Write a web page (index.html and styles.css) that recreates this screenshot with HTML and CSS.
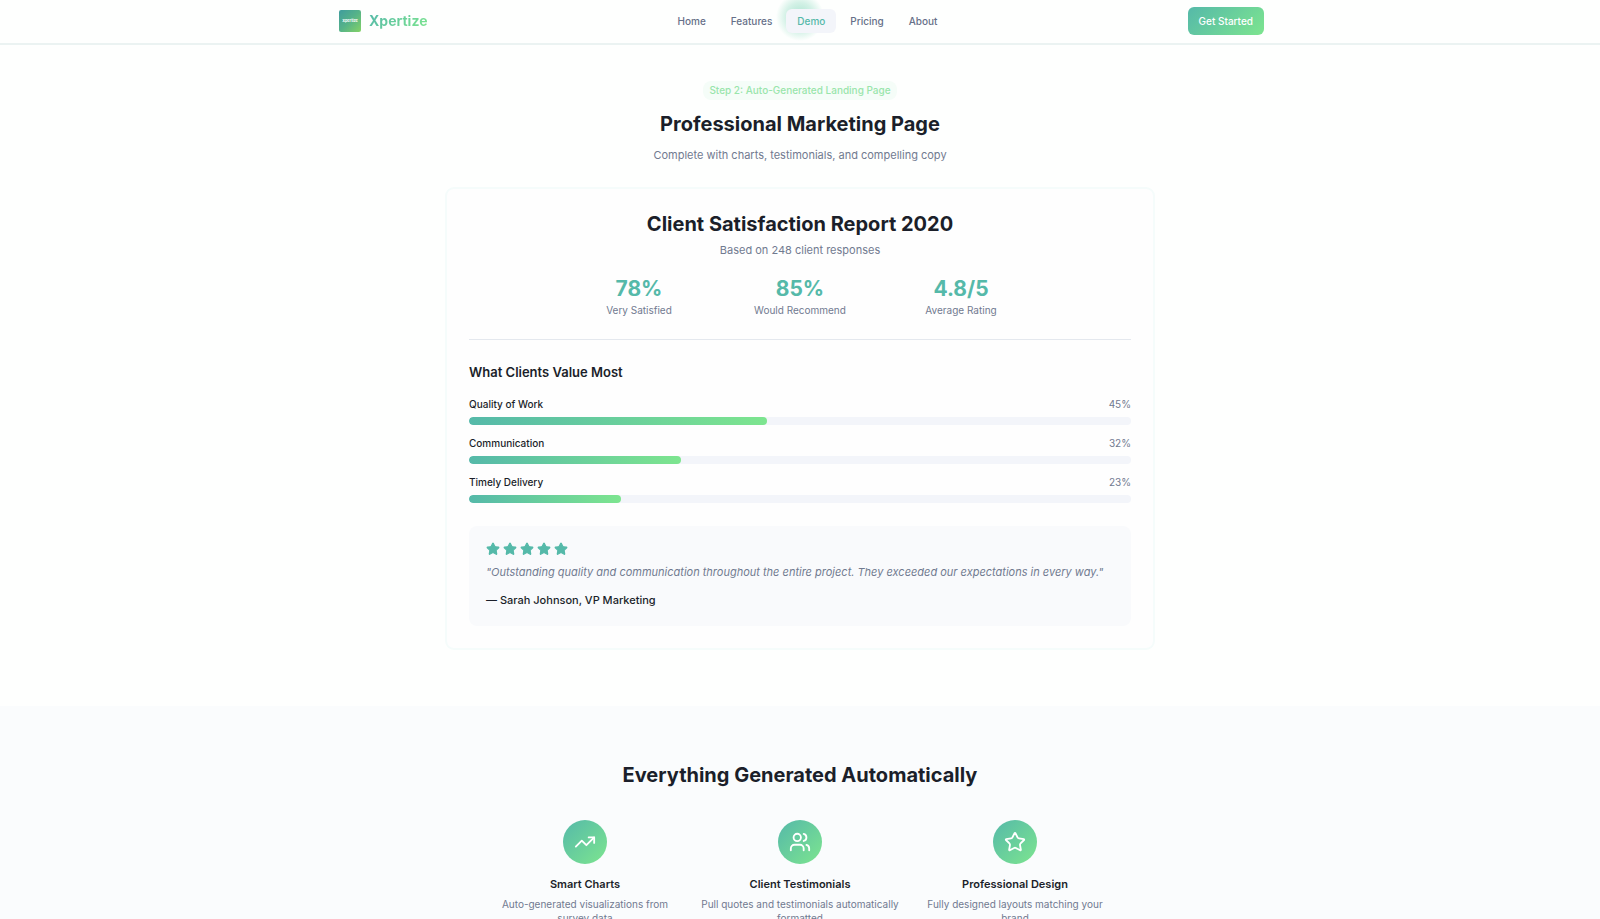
FILE: index.html
```
<!DOCTYPE html>
<html lang="en">
<head>
<meta charset="utf-8">
<meta name="viewport" content="width=device-width, initial-scale=1">
<title>Xpertize - Demo</title>
<link rel="stylesheet" href="styles.css">
</head>
<body>

<header class="site-header">
	<div class="header-inner">
		<a href="#" class="brand">
			<svg class="brand-mark" viewBox="0 0 64 64" aria-hidden="true">
				<defs>
					<linearGradient id="markFill" x1="0" y1="0" x2="1" y2="1">
						<stop offset="0" stop-color="#3f9c9e"/>
						<stop offset="0.5" stop-color="#56b388"/>
						<stop offset="1" stop-color="#84d366"/>
					</linearGradient>
				</defs>
				<rect width="64" height="64" rx="6" fill="url(#markFill)"/>
				<text x="32" y="36" text-anchor="middle" class="mark-text">Xpertize</text>
			</svg>
			<span class="brand-name">Xpertize</span>
		</a>
		<nav class="main-nav">
			<a href="#">Home</a>
			<a href="#">Features</a>
			<a href="#" class="active"><span>Demo</span></a>
			<a href="#">Pricing</a>
			<a href="#">About</a>
		</nav>
		<button type="button" class="cta">Get Started</button>
	</div>
</header>

<main>
	<section class="demo">
		<span class="badge">Step 2: Auto-Generated Landing Page</span>
		<h1>Professional Marketing Page</h1>
		<p class="lead">Complete with charts, testimonials, and compelling copy</p>

		<div class="report">
			<div class="report-head">
				<h2>Client Satisfaction Report 2020</h2>
				<p>Based on 248 client responses</p>
				<div class="stats">
					<div><strong>78%</strong><span>Very Satisfied</span></div>
					<div><strong>85%</strong><span>Would Recommend</span></div>
					<div><strong>4.8/5</strong><span>Average Rating</span></div>
				</div>
			</div>

			<h3>What Clients Value Most</h3>
			<div class="bars">
				<div class="bar-row">
					<div class="bar-label"><span>Quality of Work</span><em>45%</em></div>
					<div class="track"><div class="fill" style="width: 45%"></div></div>
				</div>
				<div class="bar-row">
					<div class="bar-label"><span>Communication</span><em>32%</em></div>
					<div class="track"><div class="fill" style="width: 32%"></div></div>
				</div>
				<div class="bar-row">
					<div class="bar-label"><span>Timely Delivery</span><em>23%</em></div>
					<div class="track"><div class="fill" style="width: 23%"></div></div>
				</div>
			</div>

			<div class="testimonial">
				<svg width="0" height="0" class="defs" aria-hidden="true">
					<symbol id="star" viewBox="0 0 24 24">
						<path d="M11.525 2.295a.53.53 0 0 1 .95 0l2.31 4.679a2.123 2.123 0 0 0 1.595 1.16l5.166.756a.53.53 0 0 1 .294.904l-3.736 3.638a2.123 2.123 0 0 0-.611 1.878l.882 5.14a.53.53 0 0 1-.771.56l-4.618-2.428a2.122 2.122 0 0 0-1.973 0L6.396 21.01a.53.53 0 0 1-.77-.56l.881-5.139a2.122 2.122 0 0 0-.611-1.879L2.16 9.795a.53.53 0 0 1 .294-.906l5.165-.755a2.122 2.122 0 0 0 1.597-1.16z"/>
					</symbol>
				</svg>
				<div class="stars">
					<svg><use href="#star"/></svg>
					<svg><use href="#star"/></svg>
					<svg><use href="#star"/></svg>
					<svg><use href="#star"/></svg>
					<svg><use href="#star"/></svg>
				</div>
				<p class="quote">"Outstanding quality and communication throughout the entire project. They exceeded our expectations in every way."</p>
				<p class="author">— Sarah Johnson, VP Marketing</p>
			</div>
		</div>
	</section>

	<section class="generated">
		<h2>Everything Generated Automatically</h2>
		<div class="features">
			<div class="feature">
				<div class="feature-icon">
					<svg viewBox="0 0 24 24"><path d="M22 7 13.5 15.5 8.5 10.5 2 17"/><path d="M16 7h6v6"/></svg>
				</div>
				<h3>Smart Charts</h3>
				<p>Auto-generated visualizations from survey data</p>
			</div>
			<div class="feature">
				<div class="feature-icon">
					<svg viewBox="0 0 24 24"><path d="M16 21v-2a4 4 0 0 0-4-4H6a4 4 0 0 0-4 4v2"/><circle cx="9" cy="7" r="4"/><path d="M22 21v-2a4 4 0 0 0-3-3.87"/><path d="M16 3.13a4 4 0 0 1 0 7.75"/></svg>
				</div>
				<h3>Client Testimonials</h3>
				<p>Pull quotes and testimonials automatically formatted</p>
			</div>
			<div class="feature">
				<div class="feature-icon">
					<svg viewBox="0 0 24 24"><use href="#star"/></svg>
				</div>
				<h3>Professional Design</h3>
				<p>Fully designed layouts matching your brand</p>
			</div>
		</div>
	</section>
</main>

</body>
</html>
```
FILE: styles.css
```
* {box-sizing: border-box;}
body {margin: 0; background: #fefffe; color: #1b1f2a; font-family: Inter, "Liberation Sans", sans-serif; font-size: 11px; line-height: 18px;}
h1, h2, h3, p {margin: 0;}
a {text-decoration: none;}

/* Header */
.site-header {border-bottom: 2px solid #ebf3f2; background: #fefffe;}
.header-inner {display: flex; align-items: center; justify-content: space-between; max-width: 960px; height: 43px; margin: 0 auto; padding: 0 16px 2px 19px;}
.brand {display: flex; align-items: center; gap: 8px;}
.brand-mark {display: block; width: 22px; height: 22px;}
.mark-text {font-size: 11px; font-weight: 700; fill: #fff;}
.brand-name {font-size: 14px; font-weight: 700; background: linear-gradient(135deg, #55b9a9, #7de58f); -webkit-background-clip: text; background-clip: text; color: transparent;}

.main-nav {display: flex; gap: 3px;}
.main-nav a {position: relative; padding: 3px 11px; border-radius: 6px; color: #667088; font-size: 10px; font-weight: 500;}
.main-nav .active {color: #55b9a9;}
.main-nav .active span {position: relative;}

/* Soft glow, then the pill over it */
.main-nav .active::before {content: ""; position: absolute; left: -10px; top: -16px; width: 48px; height: 48px; background: radial-gradient(closest-side, rgba(85,200,160,0.5), rgba(85,200,160,0.25) 60%, rgba(85,200,160,0));}
.main-nav .active::after {content: ""; position: absolute; inset: 0; border-radius: 6px; background: #f3f5fa;}
.main-nav .active span {z-index: 1;}

.cta {padding: 5px 11px; border: 0; border-radius: 6px; background: linear-gradient(135deg, #55b9a9, #7de58f); color: #fff; font-family: inherit; font-size: 10px; font-weight: 500; line-height: 18px;}

/* Report demo */
.demo {padding: 36px 22px 56px; text-align: center;}
.badge {display: inline-block; padding: 0 6px; border-radius: 8px; background: #f5fdf8; color: #99e5ab; font-size: 10px; font-weight: 500; line-height: 19px;}
h1, h2 {font-size: 20px; font-weight: 700; line-height: 28px;}
h1 {margin-top: 10px;}
.lead {margin-top: 8px;}
.lead, .report-head p {color: #717a90;}

.report {max-width: 710px; margin: 23px auto 0; padding: 21px 22px 22px; border: 2px solid #f5fcfb; border-radius: 9px; background: #fefefe;}
.report-head {padding-bottom: 22px; border-bottom: 1px solid #e4e8ee;}
.report-head p {margin-top: 3px;}
.stats {display: grid; grid-template-columns: repeat(3, 1fr); gap: 22px; max-width: 461px; margin: 16px auto 0;}
.stats strong {display: block; color: #55b9a9; font-size: 21px; font-weight: 700; line-height: 28px;}
.stats span {display: block; color: #717a90; font-size: 10px; line-height: 14px;}

.report h3 {margin-top: 21px; font-size: 13px; font-weight: 600; line-height: 22px; text-align: left;}
.bars {display: grid; gap: 11px; margin-top: 14px;}
.bar-label {display: flex; justify-content: space-between; margin-bottom: 6px; font-size: 10px; font-weight: 500; line-height: 14px;}
.bar-label em {color: #717a90; font-style: normal; font-weight: 400;}
.track {height: 8px; border-radius: 4px; background: #f3f5fa; overflow: hidden;}
.fill {height: 8px; border-radius: 4px; background: linear-gradient(90deg, #55b9a9, #7de58f);}

.testimonial {margin-top: 23px; padding: 16px 17px 17px; border-radius: 8px; background: #f9fafc; text-align: left;}
.defs {position: absolute;}
.stars {display: flex; gap: 3px;}
.stars svg {width: 14px; height: 14px; fill: #55b9a9; stroke: #55b9a9; stroke-width: 2;}
.quote {margin-top: 7px; color: #717a90; font-style: italic;}
.author {margin-top: 10px; font-weight: 500;}

/* Feature columns */
.generated {padding: 55px 22px; background: #fafcfd; text-align: center;}
.features {display: grid; grid-template-columns: repeat(3, 1fr); gap: 16px; max-width: 629px; margin: 31px auto 0;}
.feature-icon {display: flex; align-items: center; justify-content: center; width: 44px; height: 44px; margin: 0 auto 11px; border-radius: 50%; background: linear-gradient(135deg, #55b9a9, #7de58f);}
.feature-icon svg {width: 22px; height: 22px; fill: none; stroke: #fff; stroke-width: 2; stroke-linecap: round; stroke-linejoin: round;}
.feature h3 {font-size: 11px; font-weight: 600; line-height: 18px;}
.feature p {margin-top: 4px; color: #717a90; font-size: 10px; line-height: 14px;}
```
